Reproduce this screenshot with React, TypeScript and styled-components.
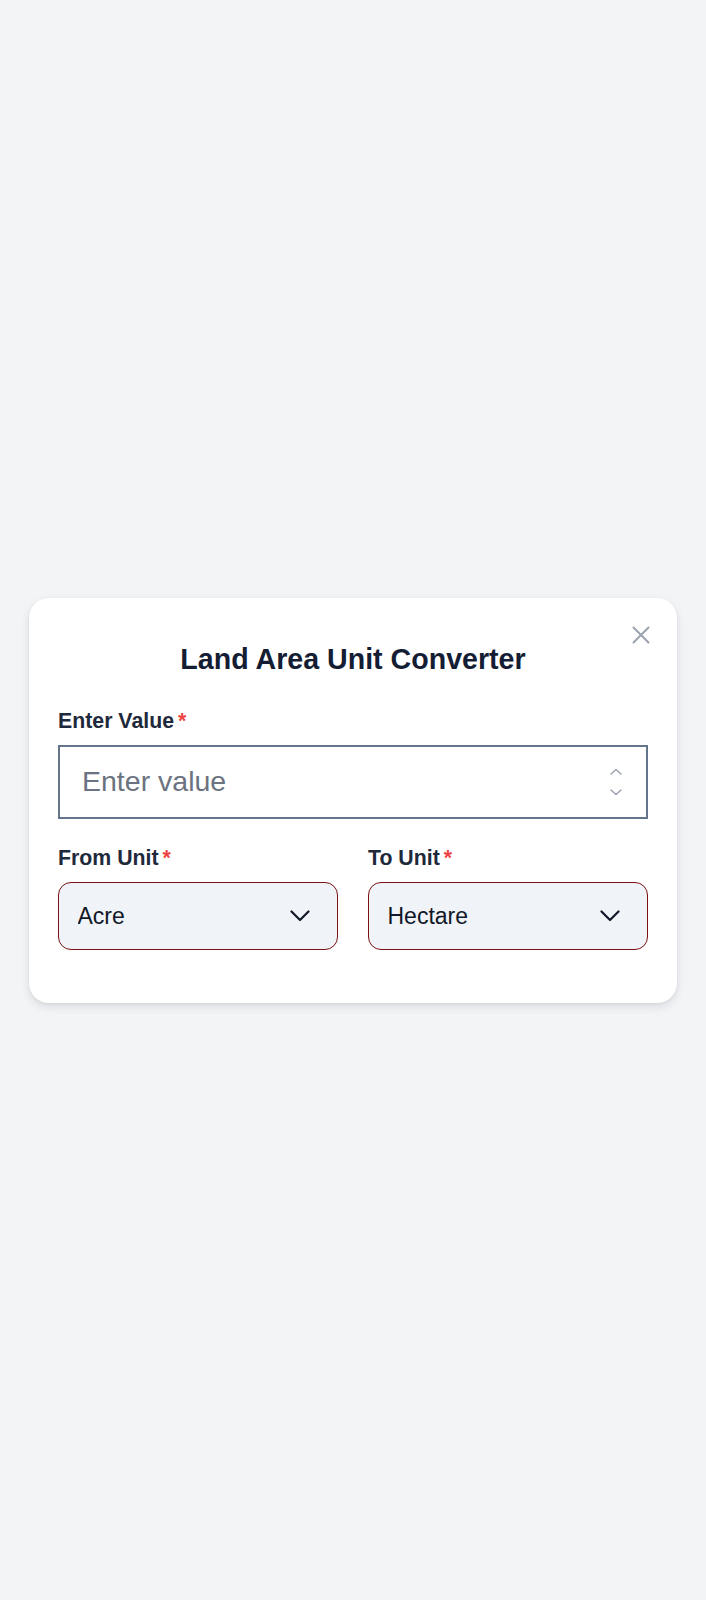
import React, { useState } from "react";
import styled, { createGlobalStyle } from "styled-components";

const GlobalStyle = createGlobalStyle`
  * { box-sizing: border-box; }
  html, body { margin: 0; padding: 0; }
  body {
    background: #f3f4f6;
    font-family: "Liberation Sans", Arial, sans-serif;
  }
`;

const Page = styled.main`
  min-height: 100vh;
  display: flex;
  align-items: center;
  justify-content: center;
  padding: 0 29px;
`;

const Card = styled.section`
  position: relative;
  width: 100%;
  max-width: 648px;
  background: #ffffff;
  border-radius: 20px;
  padding: 29px 29px 53px;
  box-shadow: 0 4px 10px rgba(15, 23, 42, 0.1), 0 1px 3px rgba(15, 23, 42, 0.06);
`;

const CloseButton = styled.button`
  position: absolute;
  top: 24px;
  right: 23px;
  width: 26px;
  height: 26px;
  padding: 4px;
  border: none;
  background: transparent;
  cursor: pointer;
  display: flex;
  align-items: center;
  justify-content: center;
`;

const Title = styled.h2`
  margin: 16px 0 34px;
  font-size: 28.6px;
  line-height: 32px;
  font-weight: 700;
  text-align: center;
  color: #141d33;
`;

const Field = styled.div`
  display: flex;
  flex-direction: column;
  gap: 12px;
`;

const Label = styled.label`
  font-size: 21.3px;
  line-height: 24px;
  font-weight: 700;
  color: #1e293b;
`;

const Required = styled.span`
  color: #ef4444;
  margin-left: 4px;
`;

const NumberBox = styled.div`
  display: flex;
  align-items: center;
  height: 74px;
  border: 2px solid #64748b;
  padding: 0 24px 0 22px;
  background: #ffffff;
`;

const NumberInput = styled.input`
  flex: 1;
  min-width: 0;
  border: none;
  outline: none;
  background: transparent;
  font-family: "Liberation Sans", Arial, sans-serif;
  font-size: 28.5px;
  color: #111827;
  padding: 0;
  &::placeholder {
    color: #6b7280;
  }
`;

const Spinner = styled.div`
  display: flex;
  flex-direction: column;
  align-items: center;
  gap: 14px;
`;

const SpinArrow = styled.svg`
  display: block;
  width: 12px;
  height: 7px;
`;

const Row = styled.div`
  display: grid;
  grid-template-columns: 1fr 1fr;
  gap: 30px;
  margin-top: 27px;
`;

const SelectWrap = styled.div`
  position: relative;
`;

const Select = styled.select`
  appearance: none;
  -webkit-appearance: none;
  width: 100%;
  height: 68px;
  border: 1.6px solid #7a1212;
  border-radius: 13px;
  background: #f0f3f8;
  padding: 0 56px 0 18.5px;
  font-family: "Liberation Sans", Arial, sans-serif;
  font-size: 23px;
  color: #111827;
  outline: none;
`;

const Chevron = styled.svg`
  position: absolute;
  right: 28px;
  top: 50%;
  transform: translateY(-50%);
  width: 20px;
  height: 12px;
  pointer-events: none;
`;

const units = ["Acre", "Hectare", "Square Meter", "Square Foot", "Square Kilometer", "Square Mile"];

function ChevronIcon() {
  return (
    <Chevron viewBox="0 0 20 12" fill="none">
      <path d="M1.5 1.5 10 10 18.5 1.5" stroke="#111827" strokeWidth="2.2" strokeLinecap="round" strokeLinejoin="round" />
    </Chevron>
  );
}

export default function App() {
  const [value, setValue] = useState("");
  const [from, setFrom] = useState("Acre");
  const [to, setTo] = useState("Hectare");

  return (
    <>
      <GlobalStyle />
      <Page>
        <Card>
          <CloseButton aria-label="Close">
            <svg width="18" height="18" viewBox="0 0 18 18" fill="none">
              <path d="M1.5 1.5 16.5 16.5M16.5 1.5 1.5 16.5" stroke="#9ca3af" strokeWidth="2" strokeLinecap="round" />
            </svg>
          </CloseButton>
          <Title>Land Area Unit Converter</Title>

          <Field>
            <Label htmlFor="value">
              Enter Value<Required>*</Required>
            </Label>
            <NumberBox>
              <NumberInput
                id="value"
                inputMode="decimal"
                placeholder="Enter value"
                value={value}
                onChange={(e) => setValue(e.target.value)}
              />
              <Spinner>
                <SpinArrow viewBox="0 0 12 7" fill="none">
                  <path d="M1 6 6 1.5 11 6" stroke="#9ca3af" strokeWidth="1.5" strokeLinecap="round" strokeLinejoin="round" />
                </SpinArrow>
                <SpinArrow viewBox="0 0 12 7" fill="none">
                  <path d="M1 1 6 5.5 11 1" stroke="#9ca3af" strokeWidth="1.5" strokeLinecap="round" strokeLinejoin="round" />
                </SpinArrow>
              </Spinner>
            </NumberBox>
          </Field>

          <Row>
            <Field>
              <Label htmlFor="from">
                From Unit<Required>*</Required>
              </Label>
              <SelectWrap>
                <Select id="from" value={from} onChange={(e) => setFrom(e.target.value)}>
                  {units.map((u) => (
                    <option key={u} value={u}>{u}</option>
                  ))}
                </Select>
                <ChevronIcon />
              </SelectWrap>
            </Field>
            <Field>
              <Label htmlFor="to">
                To Unit<Required>*</Required>
              </Label>
              <SelectWrap>
                <Select id="to" value={to} onChange={(e) => setTo(e.target.value)}>
                  {units.map((u) => (
                    <option key={u} value={u}>{u}</option>
                  ))}
                </Select>
                <ChevronIcon />
              </SelectWrap>
            </Field>
          </Row>
        </Card>
      </Page>
    </>
  );
}
